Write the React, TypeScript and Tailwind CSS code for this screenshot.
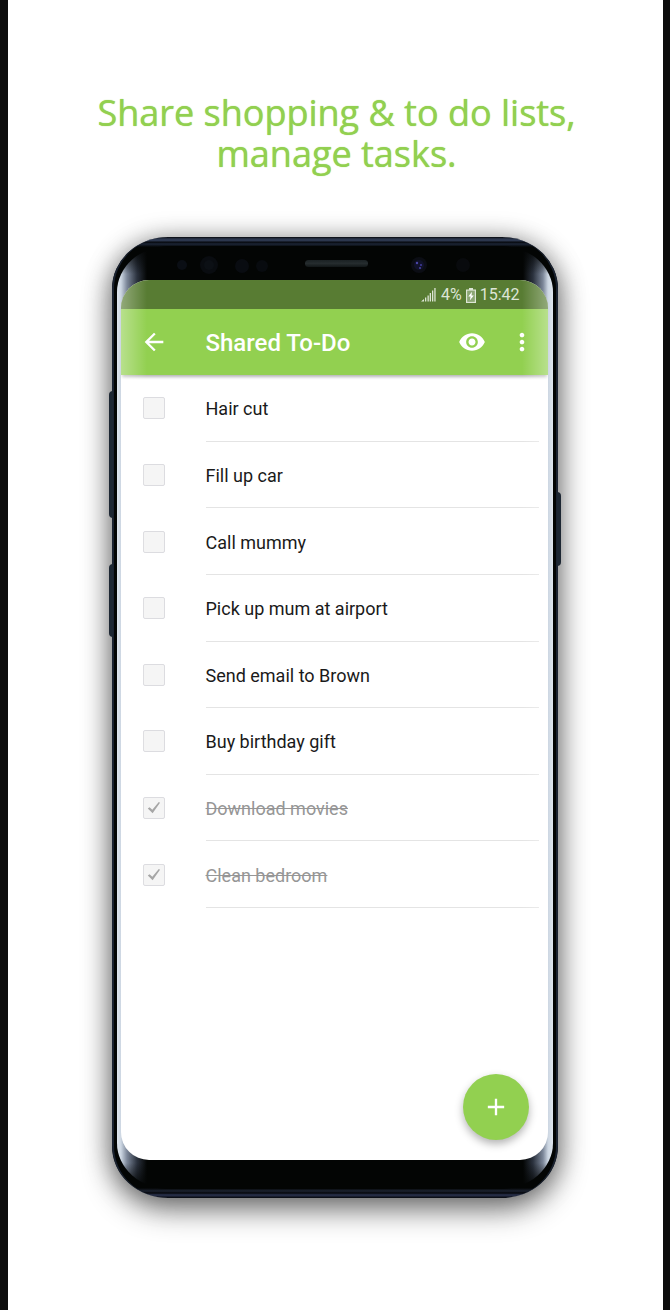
import { useState } from "react";
import type { ReactNode } from "react";

type Task = { id: string; title: string; done: boolean };

const initialTasks: Task[] = [
  { id: "hair", title: "Hair cut", done: false },
  { id: "car", title: "Fill up car", done: false },
  { id: "mummy", title: "Call mummy", done: false },
  { id: "airport", title: "Pick up mum at airport", done: false },
  { id: "email", title: "Send email to Brown", done: false },
  { id: "gift", title: "Buy birthday gift", done: false },
  { id: "movies", title: "Download movies", done: true },
  { id: "bedroom", title: "Clean bedroom", done: true },
];

function Icon({ d }: { d: string }) {
  return (
    <svg viewBox="0 0 24 24" className="size-7 fill-current" aria-hidden="true">
      <path d={d} />
    </svg>
  );
}

function IconButton({ label, children }: { label: string; children: ReactNode }) {
  return (
    <button type="button" aria-label={label} className="flex size-7 shrink-0 items-center justify-center">
      {children}
    </button>
  );
}

function Sensors() {
  return (
    <svg viewBox="0 9 427 34" className="h-[34px] w-full" aria-hidden="true">
      <defs>
        <linearGradient id="earpiece" x1="0" y1="0" x2="0" y2="1">
          <stop offset="0" stopColor="#1b2224" />
          <stop offset="0.5" stopColor="#252c2e" />
          <stop offset="1" stopColor="#121718" />
        </linearGradient>
      </defs>
      <circle cx="61" cy="28" r="5" fill="#0a0e14" />
      <circle cx="88" cy="28" r="9" fill="#090c10" />
      <circle cx="88" cy="28" r="5" fill="#0c1015" />
      <circle cx="121" cy="29" r="7" fill="#090c11" />
      <circle cx="141" cy="29" r="6" fill="#080b0f" />
      <rect x="184" y="23" width="63" height="7" rx="3.5" fill="url(#earpiece)" />
      <circle cx="298" cy="28" r="8" fill="#0b0d14" />
      <circle cx="298" cy="28" r="5" fill="#11122a" />
      <circle cx="296" cy="26" r="1.2" fill="#4a46a8" />
      <circle cx="300" cy="28" r="1.1" fill="#3d3994" />
      <circle cx="299" cy="31" r="1.1" fill="#4540a0" />
      <circle cx="342" cy="28" r="7" fill="#080a0d" />
    </svg>
  );
}

function StatusBar() {
  return (
    <div className="flex h-[29px] items-center justify-end gap-1 bg-[#587c33] pt-px pr-7 text-base leading-none text-[#dde5d6]">
      <svg viewBox="0 0 15 14" className="mr-px h-[14px] w-[15px] fill-current" aria-hidden="true">
        <path d="M0 13.500 3 11v2.500zM4 9.500h1.300v4H4zM6.500 7.500h1.300v6H6.500zM8.700 5H10v8.500H8.700zM11 2.500h1.300v11H11zM13.300 0h1.300v13.500h-1.300z" />
      </svg>
      <span>4%</span>
      <svg viewBox="0 0 10 15" className="h-[15px] w-[10px]" aria-hidden="true">
        <path
          className="fill-current"
          fillRule="evenodd"
          d="M3 0h4v1.500h3V15H0V1.500h3zM1.300 2.800v10.900h7.400V2.800z"
        />
        <path className="fill-current opacity-40" d="M1.300 2.800h7.400v10.900H1.300z" />
        <path fill="#fff" d="M6 3.800 2.300 8.600h2.300L3.800 12.500l4-5H5.500z" />
      </svg>
      <span>15:42</span>
    </div>
  );
}

function AppBar() {
  return (
    <header className="flex h-[66px] items-center bg-[#92d050] pr-3 pl-[19px] text-white shadow-[0_3px_3px_-1px_rgba(0,0,0,0.3)]">
      <IconButton label="Back">
        <Icon d="M20 11H7.830l5.590-5.590L12 4l-8 8 8 8 1.410-1.410L7.830 13H20v-2z" />
      </IconButton>
      <h2 className="ml-[38px] flex-1 pt-0.5 text-2xl font-medium">Shared To-Do</h2>
      <div className="flex gap-[22px]">
        <IconButton label="Show completed">
          <Icon d="M12 4.500C7 4.500 2.730 7.610 1 12c1.730 4.390 6 7.500 11 7.500s9.270-3.110 11-7.500c-1.730-4.390-6-7.500-11-7.500zM12 17c-2.760 0-5-2.240-5-5s2.240-5 5-5 5 2.240 5 5-2.240 5-5 5zm0-8c-1.660 0-3 1.340-3 3s1.340 3 3 3 3-1.340 3-3-1.340-3-3-3z" />
        </IconButton>
        <IconButton label="More options">
          <Icon d="M12 8c1.100 0 2-.9 2-2s-.9-2-2-2-2 .9-2 2 .9 2 2 2zm0 2c-1.100 0-2 .9-2 2s.9 2 2 2 2-.9 2-2-.9-2-2-2zm0 6c-1.100 0-2 .9-2 2s.9 2 2 2 2-.9 2-2-.9-2-2-2z" />
        </IconButton>
      </div>
    </header>
  );
}

function TaskRow({ task, onToggle }: { task: Task; onToggle: () => void }) {
  return (
    <li className="flex">
      <label className="flex flex-1 items-center pl-[22px]">
        <span className="grid size-[22px] shrink-0">
          <input
            type="checkbox"
            checked={task.done}
            onChange={onToggle}
            className="col-start-1 row-start-1 size-[22px] appearance-none rounded-[2px] border border-[#dcdce0] bg-[#f5f5f5]"
          />
          {task.done && (
            <svg
              viewBox="0 0 22 22"
              className="pointer-events-none col-start-1 row-start-1 size-[22px] fill-[#a6a6a6]"
              aria-hidden="true"
            >
              <path d="M4.800 11.500 6.600 10.300 9.300 12.800 15.800 5 17 5.800 9.600 16.300z" />
            </svg>
          )}
        </span>
        <span
          className={
            task.done
              ? "mr-[9px] ml-[41px] flex flex-1 items-center self-stretch border-b border-[#e4e4e4] pt-[3px] text-lg text-[#969696] line-through"
              : "mr-[9px] ml-[41px] flex flex-1 items-center self-stretch border-b border-[#e4e4e4] pt-[3px] text-lg text-[#1a1a1a]"
          }
        >
          {task.title}
        </span>
      </label>
    </li>
  );
}

function Phone({ children }: { children: ReactNode }) {
  return (
    <div className="relative w-full max-w-[446px] rounded-[56px/52px] bg-[linear-gradient(#05070b,#2c374e_2px,#2c374e_4px,#05070b_5px,#1c2536_7px,#030504_10px,#030504_calc(100%-10px),#1c2230_calc(100%-7px),#05070b_calc(100%-5px),#2b3350_calc(100%-3px),#05070b)] shadow-[0_2px_26px_rgba(0,0,0,0.35),0_12px_30px_rgba(0,0,0,0.45)]">
      <span className="absolute top-[154px] -left-[3px] h-[127px] w-[4px] rounded-l-sm bg-[#1d2733]" />
      <span className="absolute top-[327px] -left-[3px] h-[73px] w-[4px] rounded-l-sm bg-[#1d2733]" />
      <span className="absolute top-[255px] -right-[3px] h-[74px] w-[4px] rounded-r-sm bg-[#1d2733]" />
      <div className="rounded-[56px/52px] border-x-2 border-[#1a2230] px-[3px] py-[9px]">
        <div className="rounded-[52px/46px] bg-[linear-gradient(#030504,transparent_28px,transparent_calc(100%-26px),#030504),linear-gradient(90deg,#dfe6ee,#ccd6e2_4px,#7c8799_10px,#2b323e_20px,#030504_30px,#030504_calc(100%-30px),#2b323e_calc(100%-20px),#7c8799_calc(100%-10px),#ccd6e2_calc(100%-5px),#dfe6ee)] pr-[5px] pl-1">
          <Sensors />
          <div className="relative flex min-h-[880px] flex-col overflow-hidden rounded-[28px] bg-white">
            {children}
          </div>
          <div className="h-[29px]" />
        </div>
      </div>
    </div>
  );
}

export default function App() {
  const [tasks, setTasks] = useState(initialTasks);

  const toggle = (id: string) =>
    setTasks((list) => list.map((t) => (t.id === id ? { ...t, done: !t.done } : t)));

  return (
    <div className="min-h-screen bg-[#0d0d0d] pr-[7px] pl-2 font-['Roboto',sans-serif]">
      <main className="flex min-h-screen flex-col items-center overflow-hidden bg-white pt-[92px] pr-[18px] pb-[112px] pl-4">
        <h1 className="mb-[63px] pl-1 text-center font-['Open_Sans',sans-serif] text-4xl leading-[41px] font-medium text-[#92d050] [text-shadow:0_0_1px_#92d050]">
          Share shopping &amp; to do lists,
          <br />
          manage tasks.
        </h1>
        <Phone>
          <StatusBar />
          <AppBar />
          <ul className="grid h-[533px] auto-rows-fr">
            {tasks.map((task) => (
              <TaskRow key={task.id} task={task} onToggle={() => toggle(task.id)} />
            ))}
          </ul>
          <span className="pointer-events-none absolute inset-0 bg-[linear-gradient(90deg,rgba(255,255,255,0.35),transparent_26px,transparent_calc(100%-26px),rgba(255,255,255,0.35))]" />
          <button
            type="button"
            aria-label="Add task"
            className="absolute right-[19px] bottom-5 flex size-[66px] items-center justify-center rounded-full bg-[#92d050] text-white shadow-[0_4px_8px_rgba(0,0,0,0.3)]"
          >
            <Icon d="M19 13h-6v6h-2v-6H5v-2h6V5h2v6h6v2z" />
          </button>
        </Phone>
      </main>
    </div>
  );
}
